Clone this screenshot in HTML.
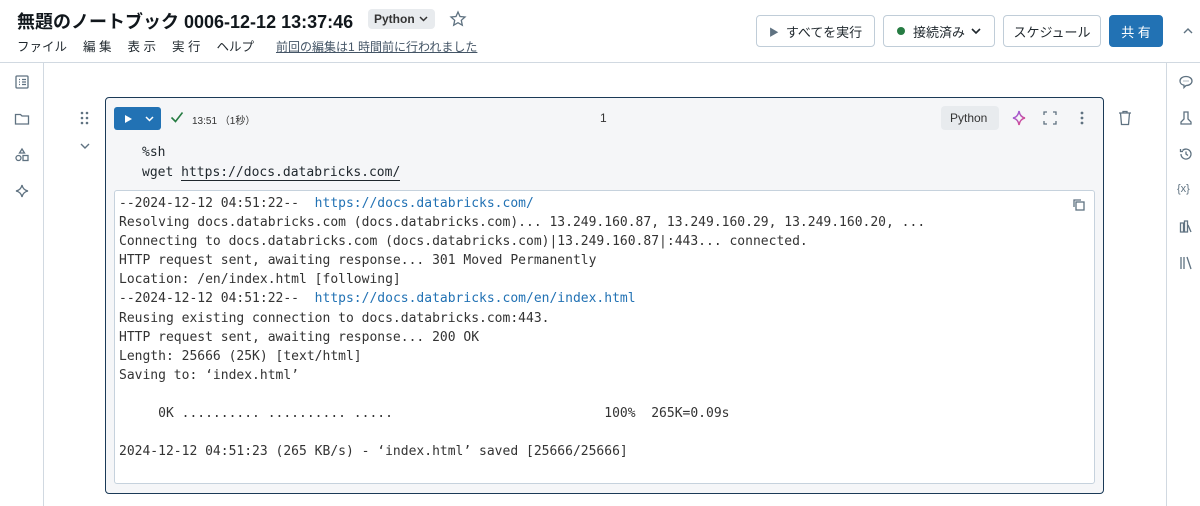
<!DOCTYPE html>
<html><head><meta charset="utf-8"><style>
*{box-sizing:border-box;margin:0;padding:0}
body{width:1200px;height:506px;overflow:hidden;background:#fff;font-family:"Liberation Sans","Noto Sans CJK JP",sans-serif;color:#1f272d;position:relative}
.abs{position:absolute}
.title{left:17px;top:8px;font-size:18px;font-weight:bold;color:#11171c}
.pill{background:#e8ebee;border-radius:4px;font-size:12px;color:#333;padding:3px 6px}
.menu{left:17px;top:36px;font-size:12.5px;color:#1f272d;word-spacing:0}
.menu span{margin-right:16px}
.btn{border:1px solid #c0cdd8;border-radius:4px;height:32px;top:15px;font-size:13px;display:flex;align-items:center;justify-content:center;background:#fff}
.mono{font-family:"DejaVu Sans Mono","Liberation Mono",monospace;font-size:13px}
svg{display:block}
.ico{stroke:#5f7281;fill:none;stroke-width:1.3}
</style></head><body>
<div class="abs title">無題のノートブック 0006-12-12 13:37:46</div>
<div class="abs pill" style="left:368px;top:9px;height:20px;width:67px;font-weight:bold;display:flex;align-items:center">Python<svg style="margin-left:4px" width="9" height="6"><path d="M1 1l3.5 3.5L8 1" stroke="#333" stroke-width="1.5" fill="none"/></svg></div>
<svg class="abs" style="left:449px;top:10px" width="18" height="18" viewBox="0 0 18 18"><path class="ico" d="M9 2l2 4.5 5 .5-3.7 3.3 1 4.9L9 12.7 4.7 15.2l1-4.9L2 7l5-.5z"/></svg>
<div class="abs menu"><span>ファイル</span><span>編 集</span><span>表 示</span><span>実 行</span><span style="margin-right:22px">ヘルプ</span><span style="color:#445566;text-decoration:underline;font-size:12px">前回の編集は1 時間前に行われました</span></div>
<div class="abs btn" style="left:756px;width:119px"><span style="color:#5f7281;font-size:10px;margin-right:7px">▶</span>すべてを実行</div>
<div class="abs btn" style="left:883px;width:112px"><span style="width:8px;height:8px;border-radius:50%;background:#277c43;margin-right:8px"></span>接続済み<svg style="margin-left:6px" width="10" height="7"><path d="M1 1l4 4 4-4" stroke="#1f272d" stroke-width="1.6" fill="none"/></svg></div>
<div class="abs btn" style="left:1003px;width:98px">スケジュール</div>
<div class="abs btn" style="left:1109px;width:54px;background:#2272b4;border-color:#2272b4;color:#fff">共 有</div>
<svg class="abs" style="left:1183px;top:28px" width="10" height="7"><path d="M1 5l4-4 4 4" stroke="#5f7281" stroke-width="1.4" fill="none"/></svg>
<div class="abs" style="left:0;top:62px;width:1200px;height:1px;background:#d1d9e1"></div>
<div class="abs" style="left:43px;top:63px;width:1px;height:443px;background:#d1d9e1"></div>
<div class="abs" style="left:1166px;top:63px;width:1px;height:443px;background:#d1d9e1"></div>
<svg class="abs" style="left:14px;top:74px" width="16" height="16"><rect class="ico" x="2" y="2" width="12" height="12" rx="1"/><path class="ico" d="M5 5.5h1M8 5.5h4M5 8h1M8 8h4M5 10.5h1M8 10.5h4"/></svg>
<svg class="abs" style="left:14px;top:111px" width="16" height="16"><path class="ico" d="M1.5 3.5h5l1.5 1.5h6.5v8h-13z"/></svg>
<svg class="abs" style="left:14px;top:147px" width="16" height="16"><path class="ico" d="M8 2l2.5 4h-5z"/><circle class="ico" cx="4.5" cy="11" r="2.5"/><rect class="ico" x="9" y="8.5" width="5" height="5"/></svg>
<svg class="abs" style="left:14px;top:183px" width="16" height="16"><path class="ico" d="M8 2q1 5 6 6q-5 1-6 6q-1-5-6-6q5-1 6-6z"/></svg>
<svg class="abs" style="left:1178px;top:74px" width="16" height="16"><path class="ico" d="M8 2.5c3.5 0 6 2 6 4.5s-2.5 4.5-6 4.5l-2 2v-2.3C3.5 10.8 2 9 2 7c0-2.5 2.5-4.5 6-4.5z"/><path d="M5.5 7h1M7.5 7h1M9.5 7h1" stroke="#5f7281"/></svg>
<svg class="abs" style="left:1178px;top:110px" width="16" height="16"><path class="ico" d="M6 2h4v7l3 3v2H3v-2l3-3z"/></svg>
<svg class="abs" style="left:1178px;top:146px" width="16" height="16"><path class="ico" d="M3 8a5 5 0 1 0 1.5-3.5M2.5 3v2.5h2.5M8 5.5V8l2 1.5"/></svg>
<div class="abs" style="left:1177px;top:183px;font-size:11px;color:#5f7281">{x}</div>
<svg class="abs" style="left:1178px;top:218px" width="16" height="16"><path class="ico" d="M2.5 5v9h3V5zM6.5 3v11h3V3zM10 7l3 7"/></svg>
<svg class="abs" style="left:1178px;top:255px" width="16" height="16"><path class="ico" d="M3 2v12M6 2v12M9 2l4 12"/></svg>
<svg class="abs" style="left:79px;top:110px" width="12" height="16"><g fill="#5f7281"><circle cx="3" cy="3" r="1.3"/><circle cx="8" cy="3" r="1.3"/><circle cx="3" cy="8" r="1.3"/><circle cx="8" cy="8" r="1.3"/><circle cx="3" cy="13" r="1.3"/><circle cx="8" cy="13" r="1.3"/></g></svg>
<svg class="abs" style="left:80px;top:143px" width="10" height="7"><path d="M1 1l4 4 4-4" stroke="#5f7281" stroke-width="1.4" fill="none"/></svg>
<svg class="abs" style="left:1116px;top:109px" width="18" height="18"><path class="ico" d="M3 4h12M7 4V2.5h4V4M4.5 4l1 11.5h7l1-11.5"/></svg>
<div class="abs" style="left:105px;top:97px;width:999px;height:397px;border:1px solid #1b3a57;border-radius:4px;background:#f5f6f8"></div>
<div class="abs" style="left:114px;top:107px;width:47px;height:23px;background:#2272b4;border-radius:3px;display:flex;align-items:center;padding-left:9px"><svg width="10" height="10"><path d="M2 1l7 4-7 4z" fill="#fff"/></svg><svg style="margin-left:12px" width="9" height="6"><path d="M1 1l3.5 3.5L8 1" stroke="#fff" stroke-width="1.5" fill="none"/></svg></div>
<svg class="abs" style="left:170px;top:111px" width="14" height="12"><path d="M1.5 6.5l4 4 7-9" stroke="#277c43" stroke-width="1.6" fill="none"/></svg>
<div class="abs" style="left:192px;top:112px;font-size:10px;color:#333">13:51 （1秒）</div>
<div class="abs" style="left:600px;top:111px;font-size:12px;color:#333">1</div>
<div class="abs pill" style="left:941px;top:106px;height:24px;width:58px;font-size:12px;padding:5px 9px">Python</div>
<svg class="abs" style="left:1010px;top:109px" width="18" height="18"><defs><linearGradient id="g" x1="0" y1="0" x2="1" y2="1"><stop offset="0" stop-color="#8a63f2"/><stop offset="1" stop-color="#e8457a"/></linearGradient></defs><path d="M9 2q1 6 6 7q-5 1-6 7q-1-6-6-7q5-1 6-7z" fill="none" stroke="url(#g)" stroke-width="1.5"/></svg>
<svg class="abs" style="left:1042px;top:110px" width="16" height="16"><path class="ico" d="M2 5V2h3M11 2h3v3M14 11v3h-3M5 14H2v-3"/></svg>
<svg class="abs" style="left:1078px;top:110px" width="8" height="16"><g fill="#5f7281"><circle cx="4" cy="3" r="1.4"/><circle cx="4" cy="8" r="1.4"/><circle cx="4" cy="13" r="1.4"/></g></svg>
<div class="abs mono" style="left:142px;top:143px;line-height:20px;color:#1f272d">%sh<br>wget <span style="border-bottom:1px solid #1f272d">https://docs.databricks.com/</span></div>
<div class="abs" style="left:114px;top:190px;width:981px;height:294px;background:#fff;border:1px solid #c6d2dd;border-radius:3px"></div>
<svg class="abs" style="left:1071px;top:197px" width="16" height="16"><rect class="ico" x="5" y="5" width="8" height="8"/><path class="ico" d="M3 10V3h7"/></svg>
<pre class="abs mono" style="left:119px;top:194px;line-height:19.1px;color:#333">--2024-12-12 04:51:22--  <span style="color:#2272b4">https://docs.databricks.com/</span>
Resolving docs.databricks.com (docs.databricks.com)... 13.249.160.87, 13.249.160.29, 13.249.160.20, ...
Connecting to docs.databricks.com (docs.databricks.com)|13.249.160.87|:443... connected.
HTTP request sent, awaiting response... 301 Moved Permanently
Location: /en/index.html [following]
--2024-12-12 04:51:22--  <span style="color:#2272b4">https://docs.databricks.com/en/index.html</span>
Reusing existing connection to docs.databricks.com:443.
HTTP request sent, awaiting response... 200 OK
Length: 25666 (25K) [text/html]
Saving to: ‘index.html’

     0K .......... .......... .....                           100%  265K=0.09s

2024-12-12 04:51:23 (265 KB/s) - ‘index.html’ saved [25666/25666]</pre>
</body></html>
